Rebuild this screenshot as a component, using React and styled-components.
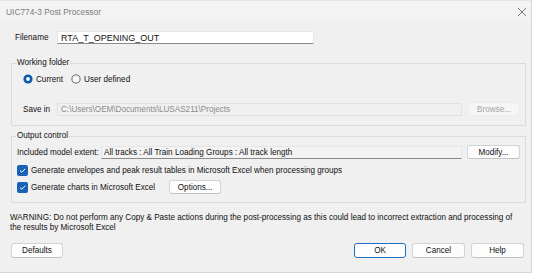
import styled, { createGlobalStyle } from "styled-components";

const GlobalStyle = createGlobalStyle`
  html, body {
    margin: 0;
    padding: 0;
    background: #ffffff;
  }
  body {
    font-family: "Liberation Sans", Arial, sans-serif;
    font-size: 8.15px;
    color: #111111;
  }
`;

const Window = styled.div`
  width: 532px;
  height: 273px;
  box-sizing: border-box;
  background-color: #f0f0f0;
  border-top: 1px solid #e4e4e4;
  border-right: 1px solid #d6d6d6;
  border-bottom: 1px solid #d6d6d6;
  display: flex;
  flex-direction: column;
`;

const TitleBar = styled.div`
  height: 21px;
  background-color: #f3f3f3;
  display: flex;
  flex-direction: row;
  align-items: center;
  justify-content: space-between;
  padding: 0 4px 0 6px;
  flex-shrink: 0;
`;

const Title = styled.div`
  font-size: 8.4px;
  color: #7d7d7d;
`;

const CloseIcon = styled.svg`
  width: 10px;
  height: 10px;
  margin-top: 1px;
`;

const Body = styled.div`
  flex: 1;
  display: flex;
  flex-direction: column;
  padding: 0 7px 0 10px;
`;

const FieldRow = styled.div`
  display: flex;
  flex-direction: row;
  align-items: center;
  height: ${(p) => p.$h || 14}px;
  margin-top: ${(p) => p.$top || 0}px;
  padding-left: ${(p) => p.$indent || 0}px;
`;

const FieldLabel = styled.div`
  width: ${(p) => p.$w}px;
  flex-shrink: 0;
  white-space: nowrap;
`;

const TextBox = styled.div`
  width: ${(p) => p.$w}px;
  height: 13px;
  box-sizing: border-box;
  display: flex;
  align-items: center;
  padding-left: ${(p) => (p.$readonly ? 2 : 3)}px;
  white-space: nowrap;
  overflow: hidden;
  background-color: ${(p) => (p.$disabled ? "#f0f0f0" : p.$readonly ? "#f3f3f3" : "#ffffff")};
  border: 1px solid ${(p) => (p.$disabled ? "#e2e2e2" : "#e6e6e6")};
  border-bottom-color: ${(p) => (p.$disabled ? "#e2e2e2" : "#8a8a8a")};
  color: ${(p) => (p.$disabled ? "#8c8c8c" : "#111111")};
  font-size: ${(p) => (p.$big ? 9 : 8.15)}px;
  border-radius: 1px;
`;

const Group = styled.fieldset`
  margin: ${(p) => p.$top}px 0 0 1px;
  width: 515px;
  box-sizing: border-box;
  padding: 0 5px ${(p) => p.$bottom}px 5px;
  border: 1px solid #dadada;
  min-inline-size: 0;
`;

const Legend = styled.legend`
  padding: 0 1px;
  margin-left: -1px;
  line-height: 10px;
  color: #111111;
`;

const Radio = styled.label`
  display: flex;
  flex-direction: row;
  align-items: center;
  gap: 3px;
  margin-right: 8px;
`;

const Check = styled.div`
  display: flex;
  flex-direction: row;
  align-items: center;
  gap: 3px;
  white-space: nowrap;
`;

const Button = styled.div`
  width: ${(p) => p.$w || 52}px;
  height: ${(p) => p.$h || 14}px;
  box-sizing: border-box;
  display: flex;
  align-items: center;
  justify-content: center;
  border-radius: 3px;
  margin-left: ${(p) => p.$ml || 0}px;
  flex-shrink: 0;
  background-color: ${(p) => (p.$disabled ? "#f6f6f6" : "#fdfdfd")};
  border: 1px solid ${(p) => (p.$primary ? "#1e6fc4" : p.$disabled ? "#ececec" : "#d3d3d3")};
  border-bottom-color: ${(p) => (p.$primary ? "#1e6fc4" : p.$disabled ? "#ececec" : "#c2c2c2")};
  color: ${(p) => (p.$disabled ? "#a3a3a3" : "#111111")};
`;

const Warning = styled.div`
  margin-top: 10px;
  width: 504px;
  line-height: 10px;
`;

const Footer = styled.div`
  margin-top: 10px;
  display: flex;
  flex-direction: row;
  align-items: center;
  padding-left: 1px;
  gap: 6px;
`;

const Spacer = styled.div`
  flex: 1;
`;

const RadioIcon = ({ checked }) => (
  <svg width="10" height="10" viewBox="0 0 10 10">
    {checked ? (
      <>
        <circle cx="5" cy="5" r="4.6" fill="#0b5cad" />
        <circle cx="5" cy="5" r="1.9" fill="#ffffff" />
      </>
    ) : (
      <circle cx="5" cy="5" r="4.1" fill="#f7f7f7" stroke="#5c5c5c" strokeWidth="0.9" />
    )}
  </svg>
);

const CheckIcon = () => (
  <svg width="11" height="11" viewBox="0 0 11 11">
    <rect x="0" y="0" width="11" height="11" rx="2" fill="#1a62b8" />
    <path d="M3 5.6 L4.8 7.3 L8.2 3.8" fill="none" stroke="#ffffff" strokeWidth="1" />
  </svg>
);

const App = () => {
  return (
    <>
      <GlobalStyle />
      <Window>
        <TitleBar>
          <Title>UIC774-3 Post Processor</Title>
          <CloseIcon viewBox="0 0 10 10">
            <path d="M1 1 L9 9 M9 1 L1 9" stroke="#6a6a6a" strokeWidth="0.9" />
          </CloseIcon>
        </TitleBar>
        <Body>
          <FieldRow $top={9} $indent={5} $h={13}>
            <FieldLabel $w={42}>Filename</FieldLabel>
            <TextBox $w={257} $big>RTA_T_OPENING_OUT</TextBox>
          </FieldRow>

          <Group $top={14} $bottom={9}>
            <Legend>Working folder</Legend>
            <FieldRow $top={6} $indent={6} $h={10}>
              <Radio>
                <RadioIcon checked />
                Current
              </Radio>
              <Radio>
                <RadioIcon />
                User defined
              </Radio>
            </FieldRow>
            <FieldRow $top={18} $indent={6}>
              <FieldLabel $w={34}>Save in</FieldLabel>
              <TextBox $w={405} $disabled>
                C:\Users\OEM\Documents\LUSAS211\Projects
              </TextBox>
              <Button $w={52} $ml={6} $disabled>
                Browse...
              </Button>
            </FieldRow>
          </Group>

          <Group $top={5} $bottom={8}>
            <Legend>Output control</Legend>
            <FieldRow $top={4}>
              <FieldLabel $w={84}>Included model extent:</FieldLabel>
              <TextBox $w={362} $readonly>
                All tracks : All Train Loading Groups : All track length
              </TextBox>
              <Button $w={53} $ml={5}>
                Modify...
              </Button>
            </FieldRow>
            <FieldRow $top={5} $h={12}>
              <Check>
                <CheckIcon />
                Generate envelopes and peak result tables in Microsoft Excel when processing groups
              </Check>
            </FieldRow>
            <FieldRow $top={4}>
              <Check>
                <CheckIcon />
                Generate charts in Microsoft Excel
              </Check>
              <Button $w={52} $ml={14}>
                Options...
              </Button>
            </FieldRow>
          </Group>

          <Warning>
            WARNING: Do not perform any Copy &amp; Paste actions during the post-processing as this could lead to
            incorrect extraction and processing of the results by Microsoft Excel
          </Warning>

          <Footer>
            <Button $h={15}>Defaults</Button>
            <Spacer />
            <Button $h={15} $primary>
              OK
            </Button>
            <Button $h={15} $w={53}>
              Cancel
            </Button>
            <Button $h={15} $w={53}>
              Help
            </Button>
          </Footer>
        </Body>
      </Window>
    </>
  );
};

export default App;
